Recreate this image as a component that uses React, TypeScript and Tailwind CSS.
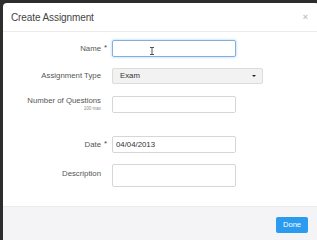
import React from "react";

const font = { fontFamily: '"Liberation Sans", Arial, sans-serif' };

const Label = ({ text, required }: { text: string; required?: boolean }) => (
  <span className="relative">
    {text}
    {required && (
      <span className="absolute -right-[6px] top-0 text-[8px] leading-none text-[#444]">*</span>
    )}
  </span>
);

export default function App() {
  return (
    <div
      className="w-[317px] h-[240px] overflow-hidden bg-[#2d2d2d] pt-[3px] pl-[3px]"
      style={font}
    >
      <div className="w-[316px] h-[260px] bg-white rounded-[4px] overflow-hidden flex flex-col">
        {/* Header */}
        <div className="h-[29px] border-b border-[#ececec] flex items-center justify-between pl-[8px] pr-[11px]">
          <span className="text-[10px] text-[#444] tracking-[-0.1px]">Create Assignment</span>
          <span className="text-[9px] leading-none text-[#c4c4c4] font-bold">×</span>
        </div>

        {/* Body */}
        <div className="pt-[8px] pb-[19px] text-[7.8px] text-[#555]">
          <div className="flex items-start">
            <div className="w-[98px] text-right leading-[17px]">
              <Label text="Name" required />
            </div>
            <div className="relative ml-[11px] w-[124px] h-[17px] border border-[#7fb0e0] rounded-[2px] shadow-[0_0_3px_rgba(102,175,233,0.6)] bg-white">
              <svg
                className="absolute left-[37px] top-[6px]"
                width="4"
                height="8"
                viewBox="0 0 4 8"
              >
                <path d="M0 0.5H4M0 7.5H4M2 0.5V7.5" stroke="#555" strokeWidth="1" fill="none" />
              </svg>
            </div>
          </div>

          <div className="flex items-start mt-[11px]">
            <div className="w-[98px] text-right leading-[16px]">
              <Label text="Assignment Type" />
            </div>
            <div className="ml-[11px] w-[151px] h-[16px] border border-[#dcdcdc] rounded-[2px] bg-[#f2f2f2] flex items-center justify-between pl-[7px] pr-[6px] text-[#333]">
              <span>Exam</span>
              <svg width="4" height="2" viewBox="0 0 4 2">
                <path d="M0 0H4L2 2Z" fill="#222" />
              </svg>
            </div>
          </div>

          <div className="flex items-start mt-[12px]">
            <div className="w-[98px] text-right flex flex-col items-end">
              <span className="leading-[9px]">Number of Questions</span>
              <span className="text-[4.5px] leading-[7px] text-[#888]">100 max</span>
            </div>
            <div className="ml-[11px] w-[124px] h-[17px] border border-[#d6d6d6] rounded-[2px] bg-white" />
          </div>

          <div className="flex items-start mt-[23px]">
            <div className="w-[98px] text-right leading-[17px]">
              <Label text="Date" required />
            </div>
            <div className="ml-[11px] w-[124px] h-[17px] border border-[#d6d6d6] rounded-[2px] bg-white flex items-center pl-[3px] text-[#333]">
              04/04/2013
            </div>
          </div>

          <div className="flex items-start mt-[11px]">
            <div className="w-[98px] text-right pt-[5px] leading-[9px]">
              <Label text="Description" />
            </div>
            <div className="ml-[11px] w-[124px] h-[23px] border border-[#d6d6d6] rounded-[2px] bg-white" />
          </div>
        </div>

        {/* Footer */}
        <div className="flex-1 border-t border-[#ebebeb] bg-[#f4f3f5] flex justify-end items-start pt-[10px] pr-[11px]">
          <button className="w-[32px] h-[16px] rounded-[2px] bg-[#2b9bf0] text-white text-[7.6px] leading-none flex items-center justify-center">
            Done
          </button>
        </div>
      </div>
    </div>
  );
}
